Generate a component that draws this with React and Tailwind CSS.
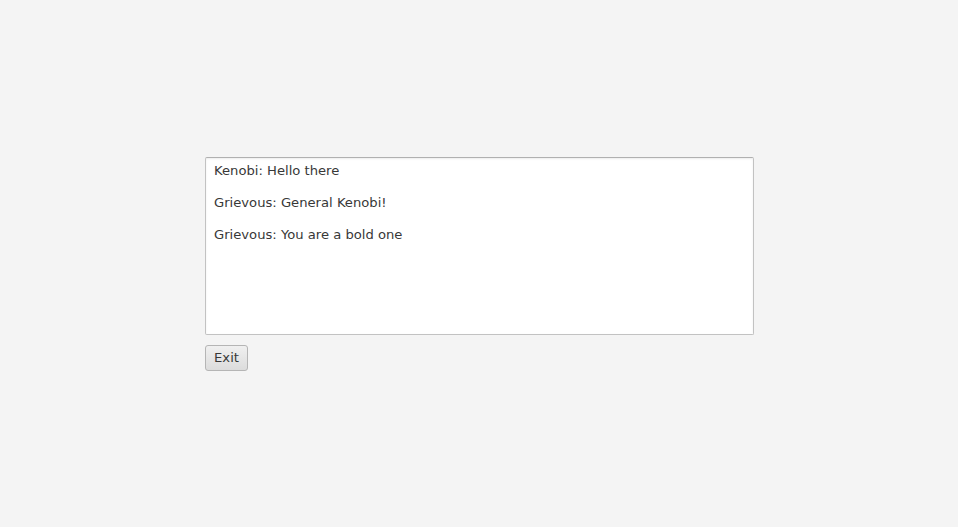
export default function App() {
  const lines = ['Kenobi: Hello there', 'Grievous: General Kenobi!', 'Grievous: You are a bold one'];
  return (
    <div className="w-full h-[527px] bg-[#f4f4f4] flex" style={{ fontFamily: '"DejaVu Sans", sans-serif' }}>
      <div className="w-[549px] pt-[157px] ml-[205px] flex flex-col">
        <div className="h-[178px] bg-white border border-[#c2c2c2] border-t-[#b0b0b0] rounded-[2px] shadow-[inset_0_1px_2px_rgba(0,0,0,0.08)] px-[8px] pt-[3px] flex flex-col gap-[13px]">
          {lines.map((l, i) => (
            <div key={i} className="text-[13.15px] leading-[19px] text-[#383838]">{l}</div>
          ))}
        </div>
        <div className="mt-[10px]">
          <button className="h-[26px] w-[43px] rounded-[3px] border border-[#b5b5b5] bg-gradient-to-b from-[#f0f0f0] to-[#dcdcdc] text-[13.15px] text-[#383838] flex items-center justify-center">
            Exit
          </button>
        </div>
      </div>
    </div>
  );
}
